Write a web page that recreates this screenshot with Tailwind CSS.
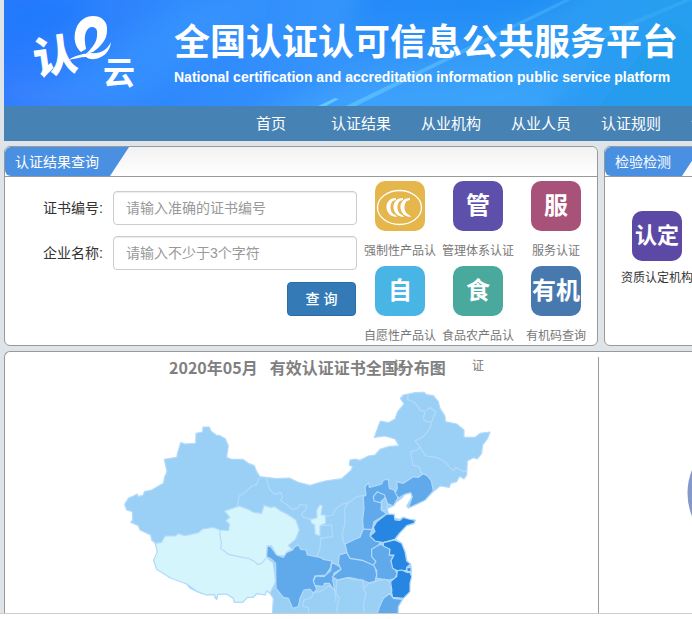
<!DOCTYPE html>
<html lang="zh-CN">
<head>
<meta charset="utf-8">
<meta name="viewport" content="width=device-width, initial-scale=1">
<title>全国认证认可信息公共服务平台</title>
<script src="https://cdn.jsdelivr.net/npm/@tailwindcss/browser@4"></script>
</head>
<body class="bg-white font-['Liberation_Sans','Noto_Sans_CJK_SC',sans-serif] text-sm text-[#333] overflow-hidden">
<div class="bg-[#dfe4e9] pl-1 overflow-hidden border-b border-[#ccc]">
  <header class="relative h-[106px] overflow-hidden bg-linear-to-r from-[#2b7bfe] via-[#3595fb] to-[#269ff0]">
    <svg class="absolute inset-0 w-full h-full" viewBox="0 0 688 106" preserveAspectRatio="none" aria-hidden="true">
      <defs>
        <linearGradient id="beam" x1="0" y1="1" x2="1" y2="0"><stop offset="0" stop-color="#6bcbff" stop-opacity=".6"/><stop offset="1" stop-color="#6bcbff" stop-opacity=".25"/></linearGradient>
        <linearGradient id="shade" x1="0" y1="0" x2="0" y2="1"><stop offset="0" stop-color="#0b70f5" stop-opacity=".4"/><stop offset="1" stop-color="#0b70f5" stop-opacity="0"/></linearGradient>
        <linearGradient id="glow" x1="0" y1="0" x2="0" y2="1"><stop offset="0" stop-color="#4ab0ff" stop-opacity="0"/><stop offset="1" stop-color="#4ab0ff" stop-opacity=".6"/></linearGradient>
        <filter id="soft" x="-20%" y="-20%" width="140%" height="140%"><feGaussianBlur stdDeviation="12"/></filter>
      </defs>
      <g filter="url(#soft)">
        <path d="M0 0H100L0 66Z" fill="url(#shade)"/>
        <path d="M360 -20H600L400 80L340 50Z" fill="url(#shade)"/>
        <path d="M180 0H265L130 106H20Z" fill="#43a5ff" fill-opacity=".3"/>
        <path d="M250 120L440 40L600 50L530 120Z" fill="url(#glow)"/>
        <path d="M0 80L140 106H0Z" fill="#5b8bff" fill-opacity=".4"/>
      </g>
      <path d="M664 20L688 34V106H595Z" fill="#159bdc" fill-opacity=".2"/>
      <path d="M342 106L560 0H567L352 106Z" fill="url(#beam)"/>
      <path d="M314 106L331 98L335 99L322 106Z" fill="#6fd0ff" fill-opacity=".8"/>
      <path d="M580 40L680 0H688L600 38Z" fill="#6bcbff" fill-opacity=".18"/>
    </svg>
    <div class="relative flex">
      <svg class="ml-6 mt-2.5 w-[116px] h-[84px] shrink-0" viewBox="28 10 116 84" role="img" aria-label="认e云" fill="#fff">
        <text x="33" y="72" font-size="44" font-weight="900" font-family="Noto Sans CJK SC" transform="rotate(-8 56 55)">认</text>
        <path d="M81 52C75 47 73 38 76 29C79 20 86 16 93 16C102 16 108 22 107 31C107 40 100 47 93 52L86 54C93 47 97 42 97 35C98 29 95 27 92 27C87 27 84 34 85 42C85 45 86 47 86 49Z"/>
        <path d="M68 60C78 54 84 54 90 53C101 54 107 50 111 42C110 49 107 54 101 57C95 60 90 60 86 57C80 57 75 59 68 60Z"/>
        <text x="103" y="84" font-size="32" font-weight="700" font-family="Noto Sans CJK SC">云</text>
      </svg>
      <div class="ml-[30px] pt-5 text-white font-bold whitespace-nowrap">
        <h1 class="text-[36px] leading-[46px]">全国认证认可信息公共服务平台</h1>
        <p class="text-sm leading-[22px]">National certification and accreditation information public service platform</p>
      </div>
    </div>
  </header>

  <nav class="flex h-[35px] bg-[#4682b4] pl-[222px] text-[15px] leading-[36px] text-white text-center overflow-hidden">
    <a href="#" class="w-[90px] shrink-0">首页</a>
    <a href="#" class="w-[90px] shrink-0">认证结果</a>
    <a href="#" class="w-[90px] shrink-0">从业机构</a>
    <a href="#" class="w-[90px] shrink-0">从业人员</a>
    <a href="#" class="w-[90px] shrink-0">认证规则</a>
    <a href="#" class="w-[90px] shrink-0">认可信息</a>
  </nav>

  <div class="relative z-10 flex gap-1.5 mt-[5px]">
    <section class="w-[594px] h-[200px] shrink-0 rounded-md border border-[#999] bg-white">
      <div class="h-[30px] rounded-t-md border-b border-[#999] bg-linear-to-b from-[#f2f2f2] to-white">
        <h2 class="inline-block h-[29px] pl-2.5 pr-[30px] rounded-l-md bg-[#4a90e2] text-white leading-[30px] align-top [clip-path:polygon(0_0,100%_0,calc(100%-19px)_100%,0_100%)]">认证结果查询</h2>
      </div>
      <div class="flex">
        <form class="w-[352px] pt-3.5">
          <div class="mb-[11px] flex items-center gap-2.5">
            <label for="cert" class="w-[98px] text-right">证书编号:</label>
            <input id="cert" type="text" placeholder="请输入准确的证书编号" class="flex-1 min-w-0 h-[34px] px-3 rounded border border-[#ccc] shadow-[inset_0_1px_1px_rgba(0,0,0,0.075)] placeholder:text-[#999]">
          </div>
          <div class="mb-3 flex items-center gap-2.5">
            <label for="org" class="w-[98px] text-right">企业名称:</label>
            <input id="org" type="text" placeholder="请输入不少于3个字符" class="flex-1 min-w-0 h-[34px] px-3 rounded border border-[#ccc] shadow-[inset_0_1px_1px_rgba(0,0,0,0.075)] placeholder:text-[#999]">
          </div>
          <button type="button" class="ml-auto mr-px block w-[69px] h-[34px] rounded border border-[#2e6da4] bg-[#337ab7] text-white font-medium">查 询</button>
        </form>
        <div class="ml-1 mt-1 grid grid-cols-[78px_78px_78px] auto-rows-[85px] text-center text-xs leading-[30px] text-[#777]">
          <a href="#"><span class="relative z-10 mx-auto mb-[5px] flex size-[50px] items-center justify-center rounded-[10px] bg-[#e4b64b]">
            <svg class="size-[50px]" viewBox="0 0 50 50" aria-hidden="true"><ellipse cx="24.500" cy="26.500" rx="22" ry="17" fill="none" stroke="#fff" stroke-width="1.300"/><g fill="#fff"><path d="M21 17C14 17 11 22 11.500 27C12 32 16 36 22 36L20.500 34C17 33 15 29 15.500 25C16 21 18 19 21 19Z"/><path d="M28 17C21 17 18 22 18.500 27C19 32 23 36 29 36L27.500 34C24 33 22 29 22.500 25C23 21 25 19 28 19Z"/><path d="M35 17C28 17 25 22 25.500 27C26 32 30 36 36 36L34.500 34C31 33 29 29 29.500 25C30 21 32 19 35 19Z"/></g></svg>
          </span>强制性产品认证</a>
          <a href="#"><span class="relative z-10 mx-auto mb-[5px] flex size-[50px] items-center justify-center rounded-[10px] bg-[#5c50aa] text-2xl font-bold text-white">管</span>管理体系认证</a>
          <a href="#"><span class="relative z-10 mx-auto mb-[5px] flex size-[50px] items-center justify-center rounded-[10px] bg-[#a95279] text-2xl font-bold text-white">服</span>服务认证</a>
          <a href="#"><span class="relative z-10 mx-auto mb-[5px] flex size-[50px] items-center justify-center rounded-[10px] bg-[#48b5e5] text-2xl font-bold text-white">自</span>自愿性产品认证</a>
          <a href="#"><span class="relative z-10 mx-auto mb-[5px] flex size-[50px] items-center justify-center rounded-[10px] bg-[#4aa99d] text-2xl font-bold text-white">食</span>食品农产品认证</a>
          <a href="#"><span class="relative z-10 mx-auto mb-[5px] flex size-[50px] items-center justify-center rounded-[10px] bg-[#4778ae] text-2xl font-bold text-white whitespace-nowrap">有机</span>有机码查询</a>
        </div>
      </div>
    </section>
    <section class="min-w-[300px] flex-1 h-[200px] rounded-md border border-[#999] bg-white">
      <div class="h-[30px] rounded-t-md border-b border-[#999] bg-linear-to-b from-[#f2f2f2] to-white">
        <h2 class="inline-block h-[29px] pl-2.5 pr-[30px] rounded-l-md bg-[#4a90e2] text-white leading-[30px] align-top [clip-path:polygon(0_0,100%_0,calc(100%-19px)_100%,0_100%)]">检验检测</h2>
      </div>
      <a href="#" class="ml-3.5 mt-[34px] block w-[76px] text-center text-xs leading-[30px] whitespace-nowrap"><span class="mx-auto mb-0.5 flex size-[50px] items-center justify-center rounded-[10px] bg-[#5c49a5] text-[22px] font-bold text-white">认定</span>资质认定机构</a>
    </section>
  </div>

  <section class="mt-[5px] flex min-w-[900px] rounded-t-md border-t border-l border-[#999] bg-white pt-[5px]">
    <div class="w-[594px] shrink-0 h-64 overflow-hidden border-r border-[#999]">
      <h2 class="flex gap-3 pl-[164px] h-6 leading-[20px] text-base font-bold text-[#808080] font-['Noto_Sans_CJK_SC',sans-serif]"><span>2020年05月</span> <span>有效认证证书全国分布图</span></h2>
      <svg class="block w-full h-[232px]" viewBox="5 381 593 232" role="img" aria-label="有效认证证书全国分布图" stroke="#b4dafb" stroke-width="3.500" stroke-linejoin="round" fill="none">
        <g transform="translate(260 380) scale(.33333)">
          <path fill="#9ad0f5" d="M-171 141L-152 141L-148 152L-132 165L-120 167L-104 176L-95 197L-100 232L-88 237L-52 238L-35 250L-17 257L-10 275L0 290L18 292L50 296L88 294L102 301L115 307L150 316L195 303L245 296L272 272L278 260L268 255L270 240L285 237L300 241L325 228L345 225L360 208L385 200L417 197L405 177L375 168L343 172L358 130L362 123L385 128L405 117L413 95L432 72L421 55L430 45L465 38L492 37L500 44L520 47L535 65L540 85L555 108L556 125L590 132L612 150L612 172L645 172L660 160L690 156L683 175L668 195L665 220L652 237L640 233L622 243L620 285L612 297L605 292L598 290L590 305L572 310L568 322L540 318L520 335L490 362L465 375L445 384L440 378L457 350L452 338L435 343L425 355L410 365L400 378L382 385L385 402L402 403L405 415L420 418L430 412L445 417L466 421L462 430L440 437L420 458L406 478L425 490L435 515L442 545L452 552L455 570L450 600L445 640L425 660L415 680L413 720L36 720L40 655L30 640L20 632L15 645L-10 640L-20 652L-38 652L-52 667L-77 667L-80 655L-100 642L-127 643L-130 658L-134 655L-137 643L-160 645L-188 635L-210 625L-220 612L-260 590L-269 594L-295 573L-310 568L-319 540L-310 530L-308 515L-314 490L-325 480L-328 465L-360 450L-365 437L-388 427L-382 420L-383 395L-400 390L-406 373L-395 355L-380 348L-368 342L-365 350L-350 345L-347 335L-325 330L-290 310L-286 290L-279 275L-287 238L-250 232L-247 218L-238 188L-225 192L-193 190L-192 160L-172 156Z"/>
          <path fill="#d4f5fc" d="M-314 490L-295 487L-285 468L-255 468L-245 461L-225 467L-185 458L-172 447L-140 442L-120 450L-94 451L-92 432L-103 422L-91 412L-106 393L-62 378L-35 388L-20 397L5 400L12 376L32 382L45 380L62 393L80 401L108 420L118 450L107 478L85 496L98 510L85 514L80 530L65 527L50 528L35 497L22 498L20 532L40 550L47 605L30 640L20 632L15 645L-10 640L-20 652L-38 652L-52 667L-77 667L-80 655L-100 642L-127 643L-130 658L-137 643L-160 645L-188 635L-220 612L-269 594L-310 568L-319 540L-308 515Z"/>
          <path d="M-120 450L-120 465L-116 490L-118 505L-95 523L-50 533L-35 535L-15 545L-8 554L5 550L18 535M-68 378L-62 347L-45 337L-25 318L-10 313L-3 295M18 292L30 328L42 343L64 338L67 354L60 361L82 375L96 388L112 385L120 374L140 375L137 390L125 400L128 410L150 418L163 422"/>
          <path fill="#d4f5fc" d="M180 374L170 390L171 413L150 418L155 430L164 435L165 462L180 468L180 437L197 430L197 405L183 405L187 378Z"/>
          <path d="M180 437L215 435L218 470L182 475L180 508L168 532M193 411L218 405L225 390L245 373L265 368L290 350L320 345M265 368L254 385L255 430L247 460L250 486L255 492M255 492L263 518L245 522L238 547M445 45L442 58L465 68L480 90L495 95L490 115L498 125L515 125L510 145L490 170L465 183L480 200L475 208L452 216L458 255L480 262L482 278L490 281M495 95L510 82L527 96L515 125M480 200L485 210L498 228L530 232L555 245L570 262L580 272L587 262L610 275L620 272"/>
          <g fill="#60a9eb">
            <path d="M490 281L475 292L460 290L430 310L410 305L412 325L403 345L418 353L434 343L452 338L457 350L445 384L465 375L495 361L520 333L514 303L503 288Z"/>
            <path d="M326 308L315 320L318 345L310 350L312 385L308 420L310 447L337 448L342 425L380 402L363 388L365 360L376 353L382 371L400 378L414 353L402 330L388 325L385 298L370 300L365 312L345 318L328 322Z"/>
            <path d="M340 350L352 335L374 345L376 357L360 368L342 363Z"/>
            <path d="M310 447L337 450L330 463L360 488L355 498L335 508L335 525L348 545L340 558L310 542L265 535L255 492L285 478L300 472Z"/>
            <path d="M22 498L32 500L50 525L70 532L80 517L98 510L102 502L115 495L123 508L138 510L142 525L180 532L190 538L215 543L212 563L197 585L165 588L160 600L165 615L170 628L160 640L150 627L132 630L120 655L115 680L98 685L85 655L70 652L48 625L47 550L35 538L20 530Z"/>
            <path d="M215 547L240 560L243 567L222 580L218 600L225 635L208 610L193 610L190 620L165 616L160 602L168 588L192 590L212 572Z"/>
            <path d="M238 525L260 518L270 535L310 542L345 558L350 585L345 605L330 610L305 600L270 593L232 600L217 590L243 568L235 550Z"/>
            <path d="M335 508L360 493L380 498L390 508L388 525L402 528L393 542L400 560L412 580L405 595L388 600L350 595L350 572L340 555L348 545L335 530Z"/>
            <path d="M390 640L400 655L428 658L415 680L413 720L345 720L358 682L370 655Z"/>
          </g>
          <path fill="#9ad0f5" d="M365 362L376 353L382 372L382 390L365 392Z"/>
          <g fill="#2686e2">
            <path d="M380 402L402 403L405 420L420 421L430 412L445 417L466 421L462 430L440 437L420 458L404 478L370 488L345 483L330 468L345 455L340 442L350 425Z"/>
            <path d="M370 488L404 480L425 490L435 515L440 543L452 552L442 560L438 571L412 572L398 565L393 542L402 525L388 525L390 508L370 498Z"/>
            <path d="M440 563L453 563L453 573L442 575Z"/>
            <path d="M412 572L425 570L440 577L450 577L455 590L450 610L450 635L430 655L398 652L388 608L410 590Z"/>
          </g>
          <path d="M230 600L228 640L238 655L230 685L238 720M232 600L262 593L282 600L310 600L310 625L318 640L310 675L315 720M310 625L330 608L375 598L392 605L396 635M228 665L225 630L208 617L180 635L160 637L155 653L132 660L128 678L145 683L150 720"/>
        </g>
      </svg>
    </div>
    <div class="flex-1 flex items-center pl-[88px]">
      <svg class="mt-4 size-[126px]" viewBox="0 0 126 126" role="img" aria-label="证书统计饼图"><circle cx="63" cy="63" r="62.500" fill="#8499ca"/></svg>
    </div>
  </section>
</div>
</body>
</html>
